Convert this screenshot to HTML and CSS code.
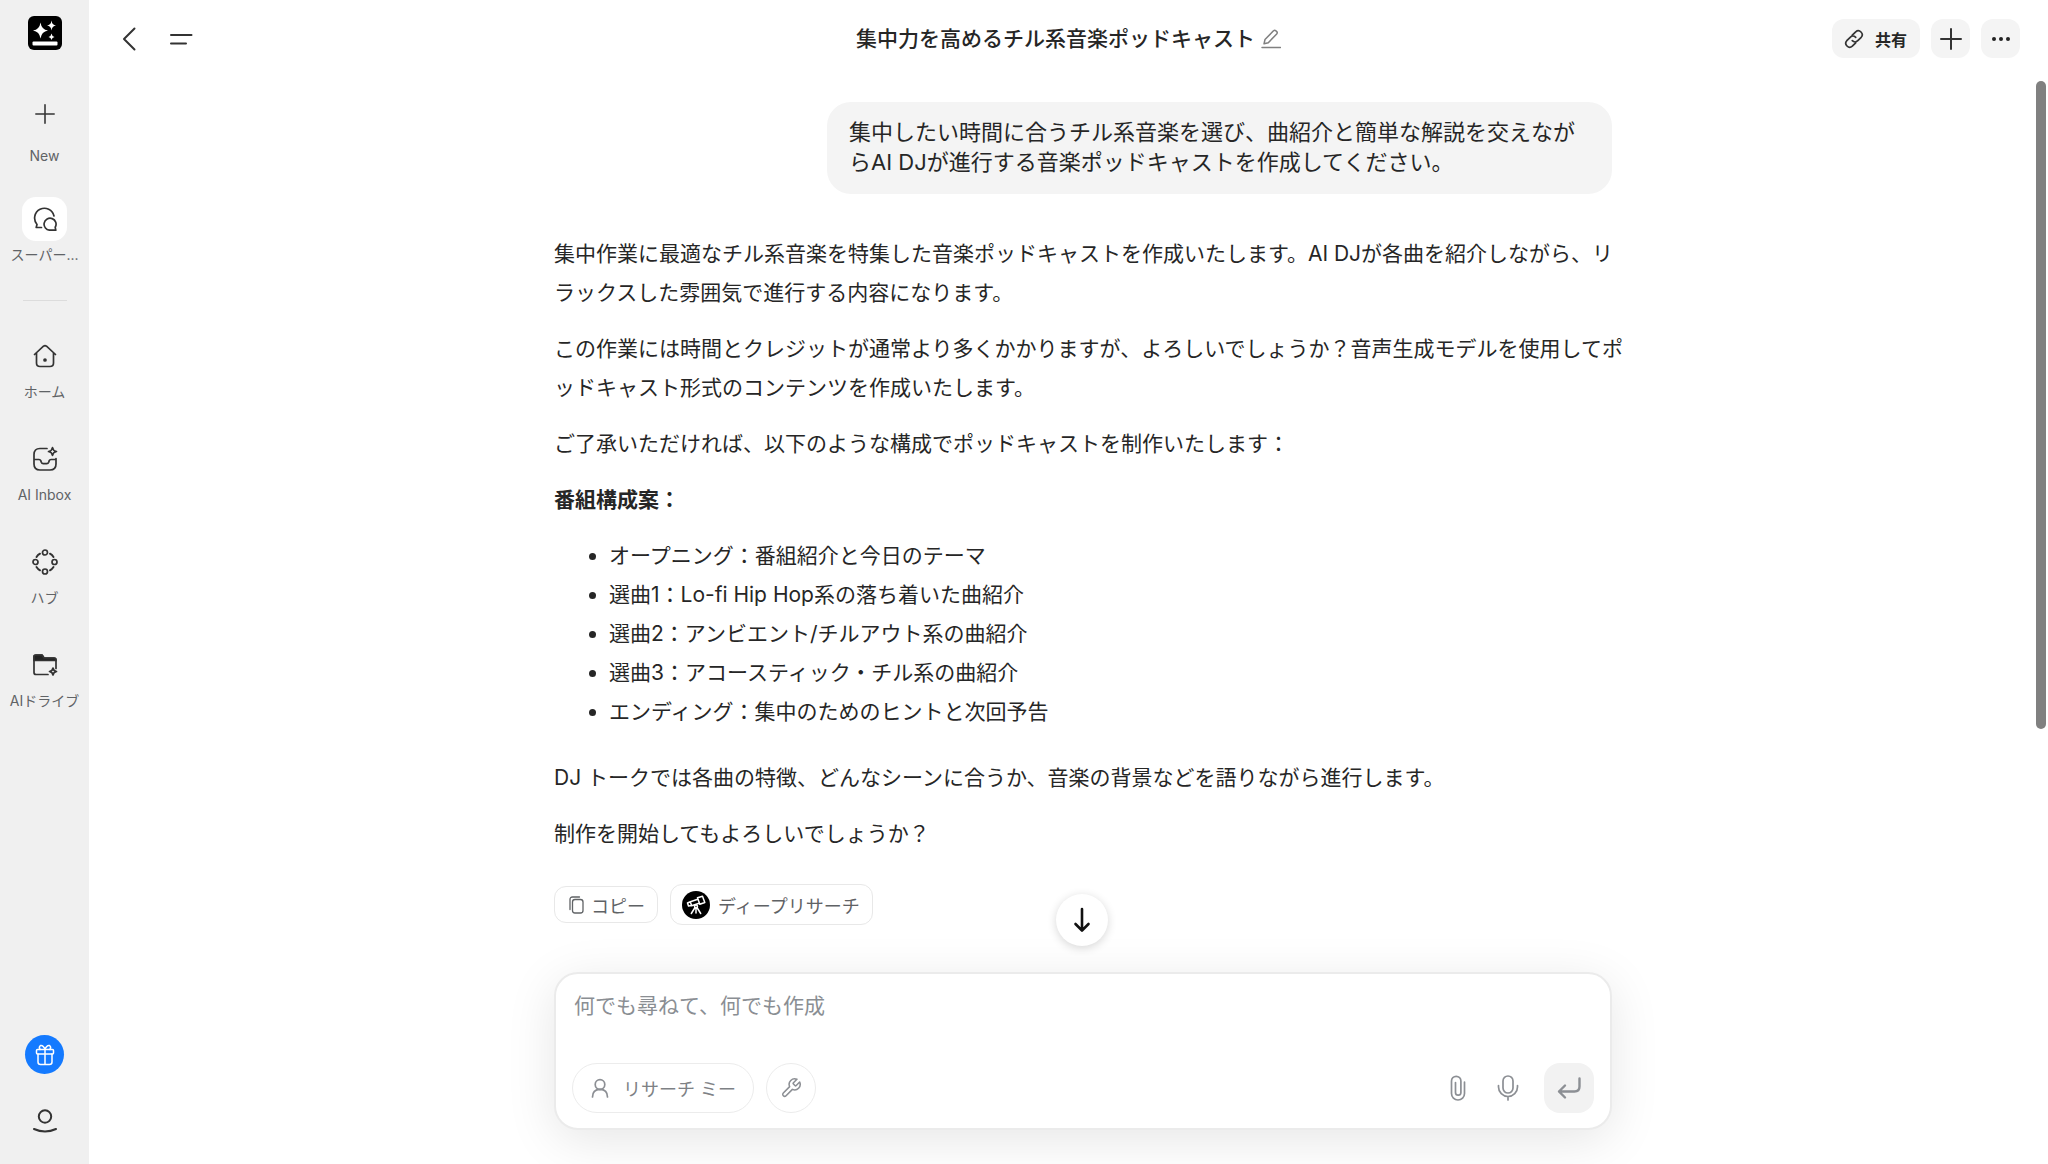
FILE: index.html
```html
<!DOCTYPE html>
<html lang="ja">
<head>
<meta charset="utf-8">
<meta name="viewport" content="width=device-width, initial-scale=1">
<title>集中力を高めるチル系音楽ポッドキャスト</title>
<link rel="stylesheet" href="styles.css">
</head>
<body>
<aside class="sidebar">
  <a class="logo" href="#" aria-label="トップ">
    <svg width="34" height="34" viewBox="0 0 34 34"><rect width="34" height="34" rx="6" fill="#000"/><g fill="#fff"><path d="M12.500 6.500Q13.500 13.500 20 14.500Q13.500 15.500 12.500 22.500Q11.500 15.500 5 14.500Q11.500 13.500 12.500 6.500Z"/><path d="M23.500 4.500Q24 9 28 9.500Q24 10 23.500 14.500Q23 10 19 9.500Q23 9 23.500 4.500Z"/><path d="M23.500 17.500Q24 20.500 26.500 21Q24 21.500 23.500 24Q23 21.500 20.500 21Q23 20.500 23.500 17.500Z"/><rect x="4.500" y="25.500" width="25" height="4" rx="1"/></g></svg>
  </a>
  <nav class="nav">
    <a class="nav-item nav-new" href="#">
      <span class="nav-tile"><svg width="22" height="22" viewBox="0 0 24 24"><path d="M12 2v20M2 12h20"/></svg></span>
      <span class="nav-label">New</span>
    </a>
    <a class="nav-item" href="#" aria-current="page">
      <span class="nav-tile nav-tile-active"><svg width="24" height="24" viewBox="0 0 24 24"><path d="M21 9A9.800 9.800 0 1 0 4 17.500L3.200 20.500H8.500M22.200 20.300A6 6 0 1 0 17 23.200H22.800Z"/></svg></span>
      <span class="nav-label">スーパー...</span>
    </a>
    <hr class="nav-divider">
    <a class="nav-item" href="#">
      <span class="nav-tile"><svg width="24" height="24" viewBox="0 0 24 24"><path d="M1.500 10.500 10.500 2.200q1.500-1 3 0L22.500 10.500M3.500 9V19q0 3.500 3.500 3.500H17q3.500 0 3.500-3.500V9"/><circle cx="12" cy="16" r="1" fill="#333"/></svg></span>
      <span class="nav-label">ホーム</span>
    </a>
    <a class="nav-item" href="#">
      <span class="nav-tile"><svg width="26" height="26" viewBox="0 0 26 26"><path d="M15 2.500H8q-6 0-6 6V18q0 6 6 6h10q6 0 6-6V12.500M2 13.500H7q1.300 0 1.800 1.200l.5 1.600q.5 1.300 2 1.300h3.400q1.500 0 2-1.300l.5-1.600q.5-1.200 1.800-1.200h5"/><path d="M20.500 1.500Q21 5 24.500 5.500Q21 6 20.500 9.500Q20 6 16.500 5.500Q20 5 20.500 1.500Z"/></svg></span>
      <span class="nav-label">AI Inbox</span>
    </a>
    <a class="nav-item" href="#">
      <span class="nav-tile"><svg width="26" height="26" viewBox="0 0 26 26"><circle cx="13" cy="3.500" r="2.500"/><circle cx="13" cy="22.500" r="2.500"/><circle cx="3.500" cy="13" r="2.500"/><circle cx="22.500" cy="13" r="2.500"/><path d="M4.500 8Q5.800 6 8 4.700M18 4.700Q20.200 6 21.500 8M4.500 18Q5.800 20 8 21.300M18 21.300Q20.200 20 21.500 18" stroke-width="2"/></svg></span>
      <span class="nav-label">ハブ</span>
    </a>
    <a class="nav-item" href="#">
      <span class="nav-tile"><svg width="26" height="26" viewBox="0 0 26 26"><path d="M16 22.500H4q-2 0-2-2V5q0-2 2-2h6l2 3H22q2 0 2 2v8.500"/><path d="M2 8.500V4.500Q2 3 4 3h6l2 3H22q2 0 2 2.500Z" fill="#222"/><path d="M21 16Q21.500 19 24.500 19.500Q21.500 20 21 23Q20.500 20 17.500 19.500Q20.500 19 21 16Z"/></svg></span>
      <span class="nav-label">AIドライブ</span>
    </a>
  </nav>
  <div class="sidebar-foot">
    <button class="gift" type="button" aria-label="ギフト">
      <svg width="20" height="22" viewBox="0 0 20 22"><rect x="1.500" y="5.500" width="17" height="4.500" rx="1"/><path d="M3 10V18q0 2.500 2.500 2.500h9q2.500 0 2.500-2.500V10M10 5.500V20.500M10 5.500Q8.500 1 5.500 1.500Q3.500 3 5 5.500M10 5.500Q11.500 1 14.500 1.500Q16.500 3 15 5.500"/></svg>
    </button>
    <button class="account" type="button" aria-label="アカウント">
      <svg width="26" height="26" viewBox="0 0 26 26"><circle cx="13" cy="8.500" r="6.200"/><path d="M2 21Q13 26 24 21"/></svg>
    </button>
  </div>
</aside>

<main class="main">
  <header class="header">
    <div class="header-left">
      <button class="icon-button" type="button" aria-label="戻る"><svg width="24" height="24" viewBox="0 0 24 24"><path d="M17.500 1.500 7 12 17.500 22.500"/></svg></button>
      <button class="icon-button" type="button" aria-label="メニュー"><svg width="24" height="24" viewBox="0 0 24 24"><path d="M2 8H22.500M2 16.500H17"/></svg></button>
    </div>
    <div class="header-title">
      <h1>集中力を高めるチル系音楽ポッドキャスト</h1>
      <button class="edit" type="button" aria-label="タイトルを編集"><svg width="20" height="20" viewBox="0 0 20 20"><path d="M1 18.500H19.500M3 14.800 4 10.500 12.500 1.800q1.200-1 2.400 0l.8.800q1.100 1.200 0 2.400L7.300 13.700Z"/></svg></button>
    </div>
    <div class="header-right">
      <button class="chip share" type="button">
        <svg width="20" height="20" viewBox="0 0 20 20"><path d="M8.300 6.200 11.700 2.800a3.900 3.900 0 0 1 5.500 5.500L13.800 11.700a3.900 3.900 0 0 1-5.500 0M11.700 13.800 8.300 17.200a3.900 3.900 0 0 1-5.500-5.500L6.200 8.300a3.900 3.900 0 0 1 5.500 0"/></svg>
        <span>共有</span>
      </button>
      <button class="chip" type="button" aria-label="新規"><svg width="22" height="22" viewBox="0 0 22 22"><path d="M11 1v20M1 11h20" stroke-width="2"/></svg></button>
      <button class="chip" type="button" aria-label="その他"><svg width="20" height="20" viewBox="0 0 20 20"><g fill="#222" stroke="none"><circle cx="3" cy="10" r="2"/><circle cx="10" cy="10" r="2"/><circle cx="17" cy="10" r="2"/></g></svg></button>
    </div>
  </header>

  <div class="content">
    <section class="thread">
      <p class="bubble">集中したい時間に合うチル系音楽を選び、曲紹介と簡単な解説を交えなが<br>らAI DJが進行する音楽ポッドキャストを作成してください。</p>
      <article class="answer">
        <p>集中作業に最適なチル系音楽を特集した音楽ポッドキャストを作成いたします。AI DJが各曲を紹介しながら、リ<br>ラックスした雰囲気で進行する内容になります。</p>
        <p>この作業には時間とクレジットが通常より多くかかりますが、よろしいでしょうか？音声生成モデルを使用してポ<br>ッドキャスト形式のコンテンツを作成いたします。</p>
        <p>ご了承いただければ、以下のような構成でポッドキャストを制作いたします：</p>
        <p><strong>番組構成案：</strong></p>
        <ul>
          <li>オープニング：番組紹介と今日のテーマ</li>
          <li>選曲1：Lo-fi Hip Hop系の落ち着いた曲紹介</li>
          <li>選曲2：アンビエント/チルアウト系の曲紹介</li>
          <li>選曲3：アコースティック・チル系の曲紹介</li>
          <li>エンディング：集中のためのヒントと次回予告</li>
        </ul>
        <p>DJ トークでは各曲の特徴、どんなシーンに合うか、音楽の背景などを語りながら進行します。</p>
        <p>制作を開始してもよろしいでしょうか？</p>
      </article>
      <div class="actions">
        <button class="action" type="button">
          <svg width="15" height="18" viewBox="0 0 15 18"><rect x="3.500" y="3.500" width="10.500" height="13.500" rx="2.500"/><path d="M1 13.500V3.500Q1 1 3.500 1H10.500"/></svg>
          <span>コピー</span>
        </button>
        <button class="action action-research" type="button">
          <svg width="28" height="28" viewBox="0 0 28 28"><circle cx="14" cy="14" r="14" fill="#000" stroke="none"/><g stroke="#fff" stroke-width="1.500"><path d="M15.500 6.800 20.500 5.200 22.800 11.500 17.800 13.300ZM15.800 8.300 8.300 10.800 9.600 14.700 17.200 12.200M8.300 10.800 5.500 12 6.500 15 9.600 14.500M14 16.500V22M13 16.500 9.300 22.500M15 16.500 18.700 22.500"/><circle cx="14" cy="15.500" r="1.500"/></g></svg>
          <span>ディープリサーチ</span>
        </button>
      </div>
      <button class="scroll-down" type="button" aria-label="一番下へ"><svg width="26" height="26" viewBox="0 0 26 26"><path d="M13 2V23M6.500 17 13 23.500 19.500 17"/></svg></button>
    </section>

    <form class="composer">
      <textarea rows="1" placeholder="何でも尋ねて、何でも作成" aria-label="メッセージ"></textarea>
      <div class="composer-bar">
        <button class="pill" type="button">
          <svg width="20" height="20" viewBox="0 0 20 20"><circle cx="10" cy="6.500" r="4.800"/><path d="M2.500 19Q2.500 11.500 10 11.300Q17.500 11.500 17.500 19"/></svg>
          <span>リサーチ ミー</span>
        </button>
        <button class="round" type="button" aria-label="ツール"><svg width="22" height="22" viewBox="0 0 24 24"><path d="M14.700 6.300a1 1 0 0 0 0 1.400l1.600 1.600a1 1 0 0 0 1.400 0l3.770-3.770a6 6 0 0 1-7.940 7.940l-6.910 6.910a2.120 2.120 0 0 1-3-3l6.910-6.910a6 6 0 0 1 7.940-7.940z"/></svg></button>
        <span class="spacer"></span>
        <button class="bare" type="button" aria-label="添付"><svg width="16" height="26" viewBox="0 0 16 26"><path d="M14.500 7V18.500a6.500 6.500 0 0 1-13 0V6a4.700 4.700 0 0 1 9.400 0V17.500a2.700 2.700 0 0 1-5.400 0V7.500"/></svg></button>
        <button class="bare" type="button" aria-label="音声入力"><svg width="22" height="26" viewBox="0 0 22 26"><rect x="6" y="1" width="10" height="17" rx="5"/><path d="M1.500 10.500V12a9.500 9.500 0 0 0 19 0V10.500M11 21.500V25"/></svg></button>
        <button class="send" type="submit" aria-label="送信"><svg width="24" height="24" viewBox="0 0 24 24"><path d="M22.500 2.500V10.500Q22.500 15.500 17.500 15.500H2M8 9.500 2 15.500 8 21.500"/></svg></button>
      </div>
    </form>
    <div class="scroll-thumb"></div>
  </div>
</main>
</body>
</html>
```
FILE: styles.css
```css
* {
  box-sizing: border-box;
}

body {
  margin: 0;
  min-height: 100vh;
  display: flex;
  background: #fff;
  color: #262626;
  font-family: Inter, "Noto Sans CJK JP", sans-serif;
}

button {
  margin: 0;
  padding: 0;
  border: 0;
  background: none;
  color: inherit;
  font: inherit;
  display: flex;
  align-items: center;
  justify-content: center;
  cursor: pointer;
}

svg {
  display: block;
  flex: none;
  fill: none;
  stroke: #333;
  stroke-width: 1.7;
  stroke-linecap: round;
  stroke-linejoin: round;
}

/* Sidebar */

.sidebar {
  flex: none;
  width: 89px;
  padding: 16px 0 30px;
  background: #f0f0f0;
  display: flex;
  flex-direction: column;
  align-items: center;
}

.logo svg {
  stroke: none;
}

.nav {
  width: 100%;
  margin-top: 42px;
  display: flex;
  flex-direction: column;
  align-items: center;
  gap: 35px;
}

.nav-item {
  width: 80px;
  display: flex;
  flex-direction: column;
  align-items: center;
  gap: 4px;
  color: #606366;
  text-decoration: none;
}

.nav-new {
  gap: 10px;
  margin-bottom: -4px;
}

.nav-tile {
  width: 45px;
  height: 44px;
  border-radius: 14px;
  display: flex;
  align-items: center;
  justify-content: center;
}

.nav-tile-active {
  background: #fff;
}

.nav-label {
  white-space: nowrap;
  font-size: 14px;
  line-height: 20px;
}

.nav-divider {
  width: 44px;
  height: 1px;
  margin: 0 0 -2px;
  border: 0;
  background: #dcdcdc;
}

.sidebar-foot {
  margin-top: auto;
  display: flex;
  flex-direction: column;
  align-items: center;
  gap: 34px;
}

.gift {
  width: 39px;
  height: 39px;
  border-radius: 50%;
  background: #147aff;
}

.gift svg {
  stroke: #fff;
  stroke-width: 1.5;
}

.account svg {
  stroke-width: 2;
}

/* Header */

.main {
  flex: 1;
  min-width: 0;
  display: flex;
  flex-direction: column;
}

.header {
  height: 77px;
  padding: 0 28px;
  display: grid;
  grid-template-columns: 1fr auto 1fr;
  align-items: center;
}

.header-left,
.header-right,
.header-title {
  display: flex;
  align-items: center;
}

.header-left {
  gap: 28px;
}

.header-left svg {
  stroke-width: 2;
}

.header-title {
  gap: 6px;
}

.header-title h1 {
  margin: 0;
  font-size: 21px;
  line-height: 30px;
  font-weight: 500;
}

.edit svg {
  stroke: #808080;
  stroke-width: 1.5;
}

.header-right {
  justify-content: flex-end;
  gap: 11px;
}

.chip {
  min-width: 39px;
  height: 39px;
  border-radius: 12px;
  background: #f4f4f4;
}

.share {
  gap: 11px;
  padding: 0 13px 0 12px;
  font-size: 16px;
  font-weight: 700;
}

/* Conversation */

.content {
  position: relative;
  flex: 1;
  padding: 25px 0 34px 29px;
  display: flex;
  flex-direction: column;
  align-items: center;
}

.thread {
  position: relative;
  width: 100%;
  max-width: 1058px;
  flex: 1;
  display: flex;
  flex-direction: column;
  align-items: flex-start;
}

.bubble {
  align-self: flex-end;
  width: 785px;
  max-width: 100%;
  margin: 0;
  padding: 15px 22px 17px;
  border-radius: 24px;
  background: #f4f4f4;
  font-size: 22px;
  line-height: 30px;
  white-space: nowrap;
}

.answer {
  margin-top: 40px;
  display: flex;
  flex-direction: column;
  gap: 17px;
  font-size: 21px;
  line-height: 39px;
  white-space: nowrap;
}

.answer p {
  margin: 0;
}

.answer ul {
  margin: 0 0 10px;
  padding-left: 55px;
}

.actions {
  margin-top: 31px;
  display: flex;
  align-items: center;
  gap: 12px;
}

.action {
  height: 37px;
  padding: 0 12px 0 14px;
  gap: 7px;
  border: 1px solid #e8e8e8;
  border-radius: 12px;
  color: #5f6265;
  font-size: 18px;
}

.action svg {
  stroke: #606366;
  stroke-width: 1.3;
}

.action-research {
  height: 41px;
  padding-left: 11px;
  gap: 8px;
}

.scroll-down {
  position: absolute;
  left: 50%;
  bottom: 26px;
  width: 52px;
  height: 52px;
  margin-left: -27px;
  border-radius: 50%;
  background: #fff;
  box-shadow: 0 2px 10px rgba(0, 0, 0, 0.16);
}

.scroll-down svg {
  stroke: #111;
  stroke-width: 2.6;
}

/* Composer */

.composer {
  width: 100%;
  max-width: 1058px;
  padding: 17px 16px 15px;
  border: 2px solid #ebebeb;
  border-radius: 24px;
  background: #fff;
  box-shadow: 0 10px 50px rgba(0, 0, 0, 0.1);
}

.composer textarea {
  display: block;
  width: 100%;
  height: 32px;
  margin: 0 0 40px;
  padding: 0 2px;
  border: 0;
  outline: 0;
  resize: none;
  background: transparent;
  color: #262626;
  font: inherit;
  font-size: 21px;
  line-height: 30px;
}

.composer textarea::placeholder {
  color: #8a8e93;
}

.composer-bar {
  display: flex;
  align-items: center;
}

.composer svg {
  stroke: #8c8f94;
}

.pill,
.round {
  height: 50px;
  border: 1px solid #ececec;
  border-radius: 25px;
  color: #7e8185;
  font-size: 18px;
}

.pill {
  gap: 13px;
  padding: 0 17px;
}

.round {
  width: 50px;
  margin-left: 12px;
}

.spacer {
  flex: 1;
}

.bare {
  width: 50px;
  height: 50px;
}

.send {
  width: 50px;
  height: 50px;
  margin-left: 11px;
  border-radius: 16px;
  background: #f2f2f2;
}

.composer .send svg {
  stroke-width: 2.4;
}

.scroll-thumb {
  position: absolute;
  top: 4px;
  right: 2px;
  width: 10px;
  height: calc(60% - 4px);
  border-radius: 5px;
  background: #808080;
}
```
